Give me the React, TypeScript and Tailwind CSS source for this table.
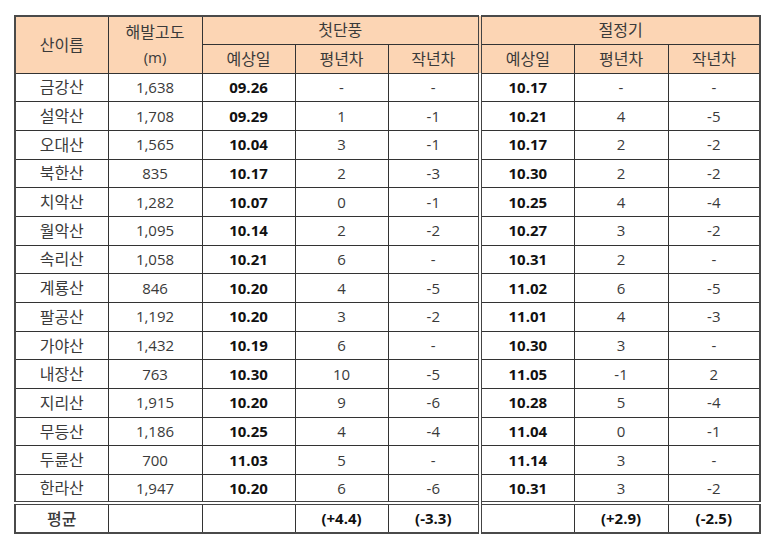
const rows: string[][] = [
  ["금강산", "1,638", "09.26", "-", "-", "10.17", "-", "-"],
  ["설악산", "1,708", "09.29", "1", "-1", "10.21", "4", "-5"],
  ["오대산", "1,565", "10.04", "3", "-1", "10.17", "2", "-2"],
  ["북한산", "835", "10.17", "2", "-3", "10.30", "2", "-2"],
  ["치악산", "1,282", "10.07", "0", "-1", "10.25", "4", "-4"],
  ["월악산", "1,095", "10.14", "2", "-2", "10.27", "3", "-2"],
  ["속리산", "1,058", "10.21", "6", "-", "10.31", "2", "-"],
  ["계룡산", "846", "10.20", "4", "-5", "11.02", "6", "-5"],
  ["팔공산", "1,192", "10.20", "3", "-2", "11.01", "4", "-3"],
  ["가야산", "1,432", "10.19", "6", "-", "10.30", "3", "-"],
  ["내장산", "763", "10.30", "10", "-5", "11.05", "-1", "2"],
  ["지리산", "1,915", "10.20", "9", "-6", "10.28", "5", "-4"],
  ["무등산", "1,186", "10.25", "4", "-4", "11.04", "0", "-1"],
  ["두륜산", "700", "11.03", "5", "-", "11.14", "3", "-"],
  ["한라산", "1,947", "10.20", "6", "-6", "10.31", "3", "-2"],
];

const avg = ["평균", "", "", "(+4.4)", "(-3.3)", "", "(+2.9)", "(-2.5)"];

const widths = [93, 94, 93, 93, 92, 94, 94, 92];

export default function App() {
  return (
    <div
      className="w-[770px] h-[547px] bg-white pt-[15px] pl-[14px] text-[15px] text-[#3a3a3a]"
      style={{ fontFamily: '"Open Sans", "Noto Sans CJK KR", sans-serif' }}
    >
      <table className="border-collapse border-2 border-[#4a4a4a] table-fixed w-[745px]">
        <colgroup>
          {widths.map((w, i) => (
            <col key={i} style={{ width: w }} />
          ))}
        </colgroup>
        <thead className="bg-[#fcd5b4]">
          <tr className="h-[28px]">
            <th rowSpan={2} className="border border-[#333] font-normal text-[16px] text-center align-middle">
              산이름
            </th>
            <th className="border-x border-[#333] font-normal text-[16px] text-center pt-[2px]">해발고도</th>
            <th colSpan={3} className="border border-[#333] font-normal text-[16px] text-center">
              첫단풍
            </th>
            <th colSpan={3} className="border border-[#333] border-l-4 border-l-[#444] border-double font-normal text-[16px] text-center">
              절정기
            </th>
          </tr>
          <tr className="h-[29px]">
            <th className="border-x border-b border-[#333] font-normal text-center pb-[2px]">(m)</th>
            <th className="border border-[#333] font-normal text-[16px] text-center">예상일</th>
            <th className="border border-[#333] font-normal text-[16px] text-center">평년차</th>
            <th className="border border-[#333] font-normal text-[16px] text-center">작년차</th>
            <th className="border border-[#333] border-l-4 border-l-[#444] border-double font-normal text-[16px] text-center">예상일</th>
            <th className="border border-[#333] font-normal text-[16px] text-center">평년차</th>
            <th className="border border-[#333] font-normal text-[16px] text-center">작년차</th>
          </tr>
        </thead>
        <tbody>
          {rows.map((r, ri) => (
            <tr key={ri} className="h-[28.7px]">
              {r.map((c, ci) => (
                <td
                  key={ci}
                  className={
                    "border border-[#333] text-center p-0 leading-none " +
                    (ci === 0 ? "text-[16px] " : "") +
                    (ci === 2 || ci === 5 ? "font-bold text-[#111] " : "") +
                    (ci === 5 ? "border-l-4 border-l-[#444] border-double " : "")
                  }
                >
                  {c}
                </td>
              ))}
            </tr>
          ))}
          <tr className="h-[30px]">
            {avg.map((c, ci) => (
              <td
                key={ci}
                className={
                  "border border-[#333] border-t-4 border-t-[#444] border-double text-center p-0 leading-none " +
                  (ci === 0 ? "text-[16px] font-medium text-[#3a3a3a] " : "font-bold text-[#111] ") +
                  (ci === 5 ? "border-l-4 border-l-[#444] " : "")
                }
              >
                {c}
              </td>
            ))}
          </tr>
        </tbody>
      </table>
    </div>
  );
}
